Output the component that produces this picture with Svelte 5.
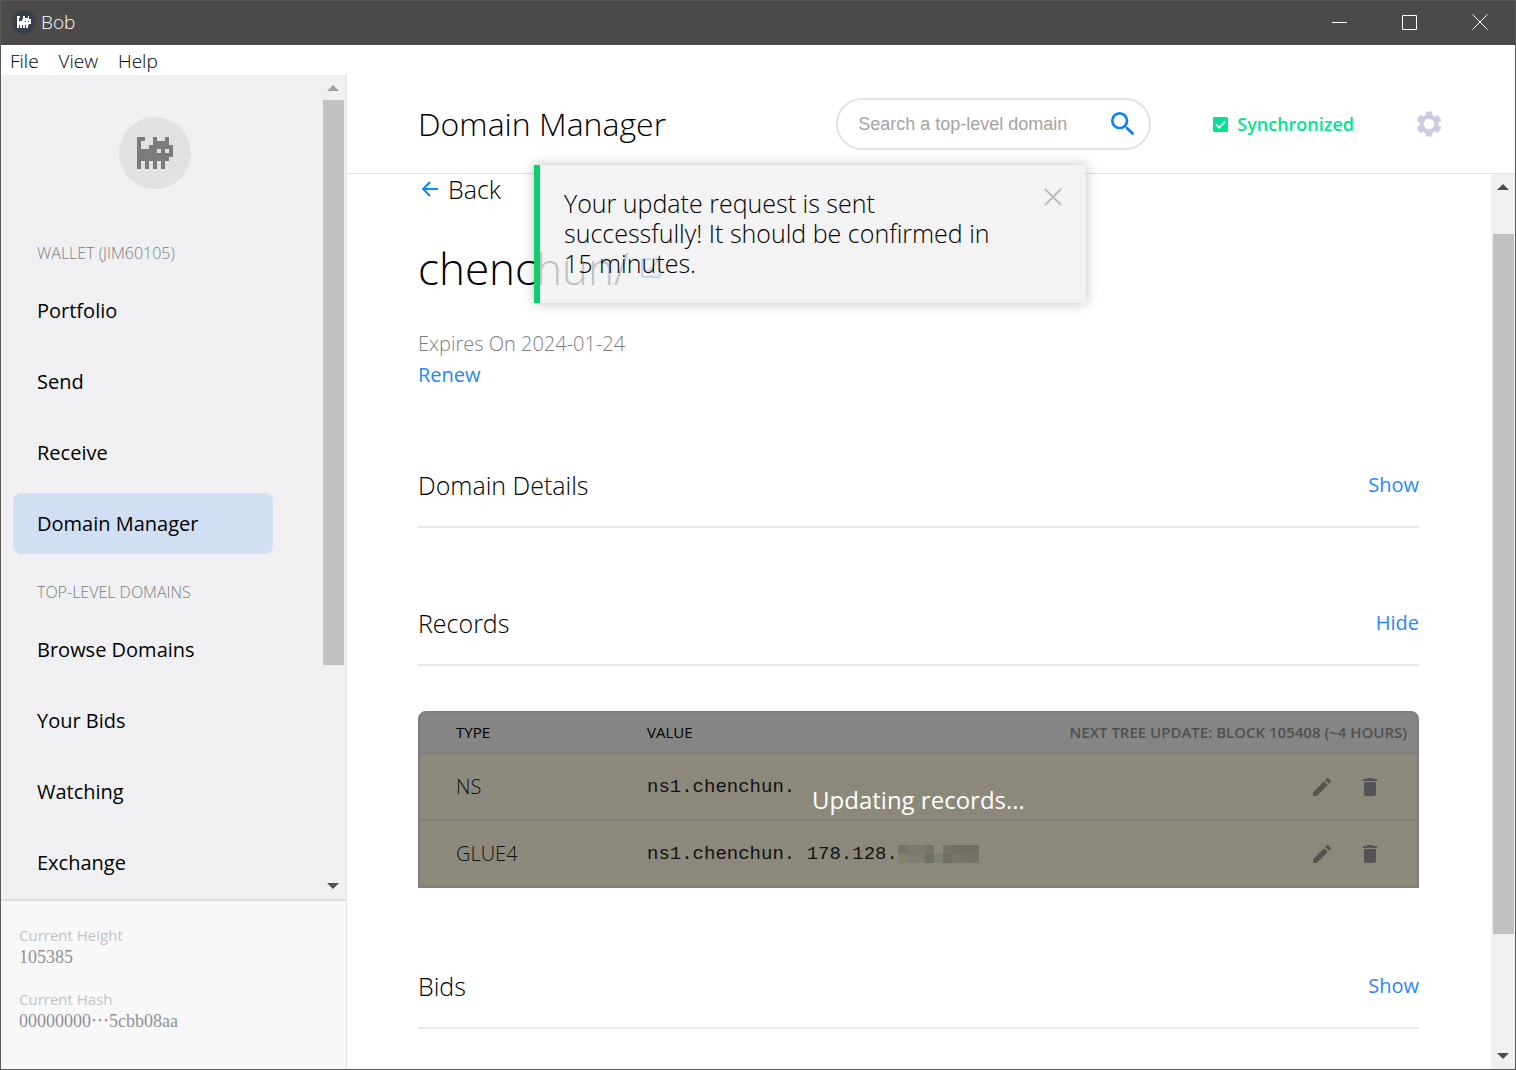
<script>
  const wallet = ['Portfolio', 'Send', 'Receive', 'Domain Manager'];
  const domains = ['Browse Domains', 'Your Bids', 'Watching', 'Exchange'];
  const active = 'Domain Manager';
  const menus = ['File', 'View', 'Help'];
  const records = [
    { type: 'NS', value: 'ns1.chenchun.', masked: false },
    { type: 'GLUE4', value: 'ns1.chenchun. 178.128.', masked: true },
  ];
  const mask = [
    '#75736a', '#7b7a70', '#7b7a70', '#75736a', '#8c897c', '#75736a', '#706e66', '#706e66', '#706e66',
    '#84826f', '#7f7d73', '#7f7d73', '#6f6e65', '#7f7e72', '#6f6e65', '#77756c', '#75736a', '#75736a',
  ];
</script>

{#snippet cat()}
  <svg viewBox="0 0 9 8" shape-rendering="crispEdges" aria-hidden="true">
    <path
      fill="currentColor"
      fill-rule="evenodd"
      d="M0 0H2V1H1V3H3V2H4V0H5V1H7V0H8V2H9V5H8V6H7V8H6V6H5V8H4V6H3V8H2V6H1V8H0ZM5 3V4H6V3ZM7 3V4H8V3Z"
    />
  </svg>
{/snippet}

{#snippet navList(items)}
  <ul>
    {#each items as item}
      <li><a href="#top" class:active={item === active}>{item}</a></li>
    {/each}
  </ul>
{/snippet}

{#snippet scrollbar(kind)}
  <div class="scrollbar {kind}" aria-hidden="true">
    <svg class="arrow up" viewBox="0 0 12 6"><path d="M0 6L6 0L12 6Z" /></svg>
    <div class="track"><div class="thumb"></div></div>
    <svg class="arrow" viewBox="0 0 12 6"><path d="M0 0L6 6L12 0Z" /></svg>
  </div>
{/snippet}

<div class="window">
  <div class="titlebar">
    <span class="app-icon">{@render cat()}</span>
    <span class="app-name">Bob</span>
    <button aria-label="Minimize"><svg viewBox="0 0 16 16"><path d="M0 8.5H15" /></svg></button>
    <button aria-label="Maximize"><svg viewBox="0 0 16 16"><path d="M.5 1.5H14.5V15.5H.5Z" /></svg></button>
    <button aria-label="Close"><svg viewBox="0 0 16 16"><path d="M.5 .5L15.5 15.5M15.5 .5L.5 15.5" /></svg></button>
  </div>

  <div class="menubar">
    {#each menus as m}<button>{m}</button>{/each}
  </div>

  <div class="body">
    <aside>
      <div class="side-scroll">
        <nav>
          <div class="avatar">{@render cat()}</div>
          <h2>WALLET (JIM60105)</h2>
          {@render navList(wallet)}
          <h2 class="second">TOP-LEVEL DOMAINS</h2>
          {@render navList(domains)}
        </nav>
        {@render scrollbar('side')}
      </div>
      <dl class="status">
        <div><dt>Current Height</dt><dd>105385</dd></div>
        <div><dt>Current Hash</dt><dd>00000000<span lang="zh-Hant">…</span>5cbb08aa</dd></div>
      </dl>
    </aside>

    <main>
      <header>
        <h1>Domain Manager</h1>
        <div class="search">
          <input type="text" placeholder="Search a top-level domain" aria-label="Search a top-level domain" />
          <button aria-label="Search">
            <svg viewBox="3 3 18 18"><path fill="#0a7cff" d="M15.5 14h-.79l-.28-.27A6.471 6.471 0 0 0 16 9.5 6.5 6.5 0 1 0 9.5 16c1.61 0 3.09-.59 4.23-1.57l.27.28v.79l5 4.99L20.49 19l-4.99-5zm-6 0C7.01 14 5 11.99 5 9.5S7.01 5 9.5 5 14 7.01 14 9.5 11.99 14 9.5 14z" /></svg>
          </button>
        </div>
        <div class="sync">
          <svg viewBox="0 0 15 15" aria-hidden="true">
            <rect width="15" height="15" rx="1" fill="#00e491" />
            <path d="M3 7.5L6.2 10.8L12 4.6" fill="none" stroke="#fff" stroke-width="1.8" />
          </svg>
          <span>Synchronized</span>
        </div>
        <button class="gear" aria-label="Settings">
          <svg viewBox="2 2 20 20"><path fill="#cccbdf" d="M19.14 12.94c.04-.3.06-.61.06-.94 0-.32-.02-.64-.07-.94l2.03-1.58a.49.49 0 0 0 .12-.61l-1.92-3.32a.488.488 0 0 0-.59-.22l-2.39.96c-.5-.38-1.03-.7-1.62-.94l-.36-2.54a.484.484 0 0 0-.48-.41h-3.84c-.24 0-.43.17-.47.41l-.36 2.54c-.59.24-1.13.57-1.62.94l-2.39-.96c-.22-.08-.47 0-.59.22L2.74 8.87c-.12.21-.08.47.12.61l2.03 1.58c-.05.3-.09.63-.09.94s.02.64.07.94l-2.03 1.58a.49.49 0 0 0-.12.61l1.92 3.32c.12.22.37.29.59.22l2.39-.96c.5.38 1.03.7 1.62.94l.36 2.54c.05.24.24.41.48.41h3.84c.24 0 .44-.17.47-.41l.36-2.54c.59-.24 1.13-.56 1.62-.94l2.39.96c.22.08.47 0 .59-.22l1.92-3.32c.12-.22.07-.47-.12-.61l-2.01-1.58zM12 16a4 4 0 1 1 0-8 4 4 0 0 1 0 8z" /></svg>
        </button>
      </header>

      <div class="content-scroll">
        <div class="content">
          <button class="back">
            <svg viewBox="0 0 16 16" aria-hidden="true"><path d="M16 8H1.500M8 1L1.200 8L8 15" fill="none" stroke="#0a84ff" stroke-width="2" /></svg>
            Back
          </button>
          <div class="domain">
            <h2>chenchun/</h2>
            <button aria-label="Open site">
              <svg viewBox="3 3 18 18"><path fill="#0a7cff" d="M19 19H5V5h7V3H5a2 2 0 0 0-2 2v14a2 2 0 0 0 2 2h14c1.100 0 2-.9 2-2v-7h-2v7zM14 3v2h3.590l-9.830 9.830 1.410 1.410L19 6.410V10h2V3h-7z" /></svg>
            </button>
          </div>
          <p class="expires">Expires On 2024-01-24</p>
          <button class="link">Renew</button>

          <section><h3>Domain Details</h3><button class="link">Show</button></section>
          <section><h3>Records</h3><button class="link">Hide</button></section>

          <div class="records">
            <table>
              <thead>
                <tr><th class="type">TYPE</th><th>VALUE</th><th class="next">NEXT TREE UPDATE: BLOCK 105408 (~4 HOURS)</th></tr>
              </thead>
              <tbody>
                {#each records as r}
                  <tr>
                    <td class="type">{r.type}</td>
                    <td class="value">
                      <span class="val">{r.value}{#if r.masked}<span class="mask">{#each mask as c}<i style:background={c}></i>{/each}</span>{/if}</span>
                    </td>
                    <td>
                      <div class="actions">
                        <button aria-label="Edit {r.type}"><svg viewBox="3 3 18 18"><path d="M3 17.250V21h3.750L17.810 9.940l-3.750-3.750L3 17.250zM20.710 7.040a1 1 0 0 0 0-1.410l-2.340-2.340a1 1 0 0 0-1.410 0l-1.830 1.830 3.750 3.750 1.830-1.830z" /></svg></button>
                        <button aria-label="Delete {r.type}"><svg viewBox="3 3 18 18"><path d="M6 19c0 1.100.9 2 2 2h8c1.100 0 2-.9 2-2V7H6v12zM19 4h-3.500l-1-1h-5l-1 1H5v2h14V4z" /></svg></button>
                      </div>
                    </td>
                  </tr>
                {/each}
              </tbody>
            </table>
            <div class="updating" role="status">Updating records...</div>
          </div>

          <section><h3>Bids</h3><button class="link">Show</button></section>
        </div>
        {@render scrollbar('page')}
      </div>

      <div class="toast" role="alert">
        <p>Your update request is sent successfully! It should be confirmed in 15 minutes.</p>
        <button aria-label="Dismiss"><svg viewBox="0 0 18 18"><path d="M1 1L17 17M17 1L1 17" /></svg></button>
      </div>
    </main>
  </div>
</div>

<style>
  :global(body) { margin: 0; }
  * { box-sizing: border-box; }
  svg { display: block; }
  h1, h2, h3, p, ul, dl, dd { margin: 0; padding: 0; font-weight: 400; }
  ul { list-style: none; }
  button { border: 0; padding: 0; background: none; color: inherit; font: inherit; cursor: pointer; }

  .window {
    display: flex;
    flex-direction: column;
    height: 100vh;
    border: 1px solid #5a5957;
    background: #fff;
    color: #000;
    font-family: "Open Sans", "Noto Sans", sans-serif;
    overflow: hidden;
  }
  .titlebar { display: flex; align-items: center; flex: none; height: 44px; padding: 0 0 2px 11px; background: #4c4a48; color: #fff; }
  .app-icon { display: grid; place-items: center; width: 24px; height: 24px; border-radius: 50%; background: #374047; }
  .app-icon svg { width: 14px; }
  .app-name { flex: 1; padding-left: 5px; font-size: 19px; font-weight: 300; }
  .titlebar button { display: grid; place-items: center; width: 70px; height: 42px; }
  .titlebar button svg { width: 16px; height: 16px; fill: none; stroke: #fff; }
  .menubar { display: flex; flex: none; gap: 20px; height: 30px; padding: 0 9px; font-size: 19px; font-weight: 300; line-height: 32px; }

  .body { display: flex; flex: 1; min-height: 0; }
  aside { display: flex; flex-direction: column; flex: none; width: 346px; border-right: 1px solid #e2e2e4; background: #f0f0f2; }
  .side-scroll { display: flex; flex: 1; min-height: 0; }
  nav { flex: 1; padding: 42px 49px 0 12px; overflow: hidden; }
  .avatar { display: grid; place-items: center; width: 72px; height: 72px; margin: 0 0 54px 106px; border-radius: 50%; background: #e1e1e1; color: #7b7b7b; }
  .avatar svg { width: 36px; }
  nav h2 { margin: 0 0 17px 24px; color: #7c7c81; font-size: 16px; font-weight: 300; line-height: 20px; }
  nav h2.second { margin-top: 28px; }
  nav ul { display: grid; gap: 10px; }
  nav a { display: block; padding: 0 24px; border-radius: 8px; color: #000; font-size: 20px; font-weight: 400; line-height: 61px; text-decoration: none; }
  nav a.active { background: #d1dff5; }
  .status { display: grid; gap: 20px; padding: 23px 18px 37px; border-top: 2px solid #dfdfe1; background: #f8f8f8; line-height: 22px; }
  dt { color: #c4c4c8; font-size: 15px; }
  dd { color: #909095; font-family: "Liberation Serif", serif; font-size: 18px; }
  dd span { font-family: "Noto Sans CJK TC", sans-serif; line-height: 18px; }

  .scrollbar { display: flex; flex-direction: column; align-items: center; flex: none; width: 24px; padding: 10px 0; background: #f0f0f0; }
  .scrollbar.side { padding-right: 2px; background: #f0f0f2; }
  .arrow { flex: none; width: 12px; height: 6px; fill: #4f4f4f; }
  .side .arrow.up { fill: #a0a0a0; }
  .track { flex: 1; width: 21px; padding: 9px 0; }
  .thumb { height: 73%; background: #c1c1c1; }
  .page .track { padding: 44px 0 5px; }
  .page .thumb { height: 86%; }

  main { position: relative; display: flex; flex-direction: column; flex: 1; min-width: 0; }
  header { display: flex; align-items: center; flex: none; height: 99px; padding: 0 73px 0 71px; border-bottom: 1px solid #e2e2e4; }
  h1 { flex: 1; padding-bottom: 2px; font-size: 32px; font-weight: 300; }
  .search { display: flex; align-items: center; width: 315px; height: 52px; padding: 0 14px 0 20px; border: 2px solid #e3e3e5; border-radius: 26px; }
  .search input { flex: 1; min-width: 0; padding: 0; border: 0; outline: 0; background: none; font: 18px "Liberation Sans", sans-serif; }
  .search input::placeholder { color: #a3a3a3; opacity: 1; }
  .search svg { width: 24px; height: 24px; }
  .sync { display: flex; align-items: center; gap: 9px; margin: 0 62px; color: #00e491; font-size: 18px; font-weight: 600; }
  .sync svg { width: 15px; height: 15px; }
  .gear svg { width: 26px; height: 26px; }

  .content-scroll { display: flex; flex: 1; min-height: 0; }
  .content { flex: 1; min-width: 0; padding: 0 72px 0 71px; overflow: hidden; }
  .back { display: flex; align-items: center; gap: 10px; padding-left: 4px; font-size: 25px; font-weight: 300; line-height: 30px; }
  .back svg { width: 16px; height: 16px; }
  .domain { display: flex; align-items: center; gap: 12px; margin: 34px 0 30px; }
  .domain h2 { font-size: 44px; font-weight: 300; line-height: 60px; }
  .domain svg { width: 20px; height: 20px; }
  .expires { color: #7c7c81; font-size: 20px; font-weight: 300; line-height: 32px; }
  .link { display: block; color: #2b86ff; font-size: 20px; line-height: 30px; }
  section { display: flex; justify-content: space-between; margin-top: 80px; padding-bottom: 26px; border-bottom: 2px solid #e9e9eb; }
  h3 { font-size: 25px; font-weight: 300; line-height: 30px; }

  .records { position: relative; margin: 45px 0 83px; border: 2px solid #7e7e7f; border-radius: 8px 8px 0 0; background: #858585; }
  table { width: 100%; border-collapse: separate; border-spacing: 0; }
  th { height: 39px; padding: 0 0 2px; font-size: 15px; font-weight: 400; line-height: 20px; text-align: left; }
  .type { width: 227px; padding-left: 36px; }
  th.next { padding-right: 10px; color: #505052; font-weight: 600; text-align: right; }
  td { height: 67px; padding: 0; border-top: 2px solid #7e7e7f; background: #8c897c; color: #111; font-size: 19px; }
  td.type { padding-left: 36px; font-size: 20px; font-weight: 300; }
  .val { display: flex; align-items: center; font-family: "Liberation Mono", monospace; white-space: pre; }
  .mask { display: grid; grid-template-columns: repeat(9, 9px); grid-auto-rows: 9px; }
  .actions { display: flex; justify-content: flex-end; gap: 30px; padding-right: 38px; }
  .actions svg { width: 18px; height: 18px; fill: #545454; }
  .updating { position: absolute; inset: 0; display: grid; place-items: center; color: #fff; font-size: 24px; }

  .toast {
    position: absolute;
    top: 90px;
    left: 187px;
    display: flex;
    align-items: flex-start;
    justify-content: space-between;
    width: 552px;
    padding: 23px 24px 25px;
    border-left: 6px solid #0dce6d;
    background: rgba(240, 240, 240, 0.8);
    box-shadow: 0 0 12px rgba(0, 0, 0, 0.25);
    font-size: 25px;
    line-height: 30px;
  }
  .toast p { width: 440px; font-weight: 300; }
  .toast svg { width: 18px; height: 18px; fill: none; stroke: #bcbcbc; stroke-width: 2; }
</style>
